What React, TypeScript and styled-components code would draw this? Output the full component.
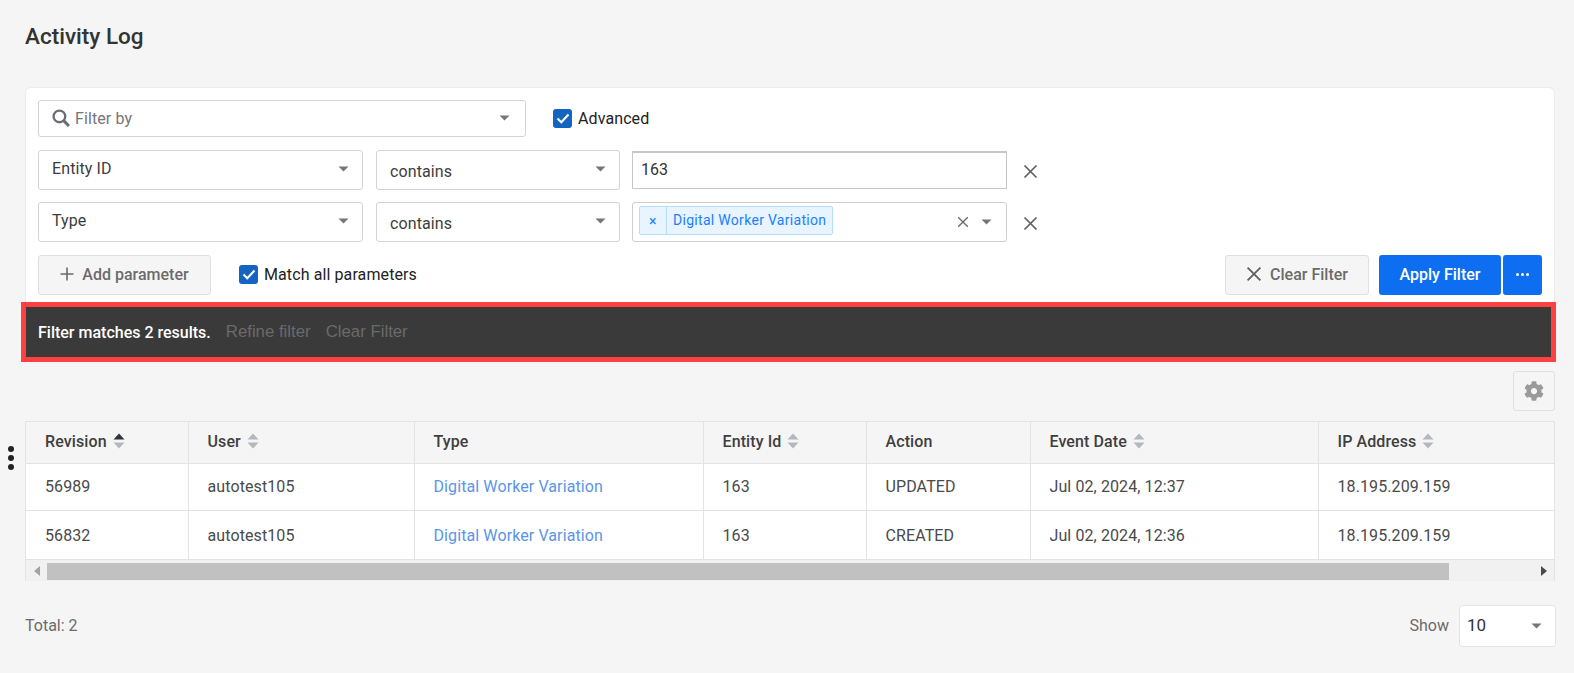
import styled, { createGlobalStyle } from "styled-components";
import { FaCog } from "react-icons/fa";

const GlobalStyle = createGlobalStyle`
  html, body {
    margin: 0;
    padding: 0;
    height: 100%;
    background: #f5f5f5;
    overflow: hidden;
  }
  body {
    font-family: Roboto, "Liberation Sans", sans-serif;
    color: #3a3a3a;
  }
`;

const Caret = ({ color = "#75757a" }: { color?: string }) => (
  <svg width="11" height="6" viewBox="0 0 11 6">
    <path d="M0.5 0.5h10L5.5 5.5z" fill={color} />
  </svg>
);

const CloseIcon = ({ size = 15, color = "#5f5f64" }: { size?: number; color?: string }) => (
  <svg width={size} height={size} viewBox="0 0 15 15" fill="none" stroke={color} strokeWidth="1.7">
    <path d="M1.5 1.5l12 12M13.5 1.5l-12 12" />
  </svg>
);

const CheckIcon = () => (
  <svg width="14" height="11" viewBox="0 0 14 11" fill="none" stroke="#fff" strokeWidth="2">
    <path d="M1.5 5.5l3.8 3.8L12.5 1.5" />
  </svg>
);

const SortIcon = ({ active }: { active?: boolean }) => (
  <SortBox width="12" height="16" viewBox="0 0 12 16">
    <path d="M6 0.5L11.5 6.5H0.5z" fill={active ? "#333" : "#b4b8bd"} />
    <path d="M6 15.5L0.5 9.5H11.5z" fill="#b4b8bd" />
  </SortBox>
);

const Page = styled.div`
  position: relative;
  height: 673px;
  padding: 0 19px 0 25px;
  box-sizing: border-box;
`;

const Title = styled.h1`
  margin: 0;
  padding-top: 23px;
  height: 87px;
  box-sizing: border-box;
  font-size: 22.5px;
  line-height: 27px;
  font-weight: 500;
  color: #333;
`;

const Card = styled.section`
  background: #fff;
  border: 1px solid #ebebeb;
  border-bottom: 0;
  border-radius: 6px 6px 0 0;
  padding-top: 12px;
`;

const FilterArea = styled.div`
  padding: 0 12px 7px 12px;
  display: flex;
  flex-direction: column;
`;

const Row = styled.div<{ $height: number; $gap?: number; $mb?: number }>`
  display: flex;
  align-items: center;
  height: ${(p) => p.$height}px;
  gap: ${(p) => p.$gap ?? 13}px;
  margin-bottom: ${(p) => p.$mb ?? 12}px;
`;

const Field = styled.div<{ $width: number; $muted?: boolean }>`
  width: ${(p) => p.$width}px;
  height: 100%;
  box-sizing: border-box;
  flex: none;
  display: flex;
  align-items: center;
  justify-content: space-between;
  background: #fff;
  border: 1px solid #d4d4d4;
  border-radius: 3px;
  padding: 0 ${(p) => (p.$muted ? 15 : 13)}px 2px 13px;
  font-size: 16px;
  letter-spacing: 0.1px;
  color: ${(p) => (p.$muted ? "#75757a" : "#3d3d3d")};
`;

const SearchLabel = styled.span`
  display: flex;
  align-items: center;
  gap: 5px;
`;

const Value = styled.span<{ $drop?: number }>`
  position: relative;
  top: ${(p) => p.$drop ?? 0}px;
`;

const TextInput = styled.div`
  width: 375px;
  height: 38px;
  flex: none;
  box-sizing: border-box;
  margin-left: -1px;
  background: #fff;
  border: 1px solid #c6c6c6;
  border-top-width: 2px;
  display: flex;
  align-items: center;
  padding: 0 0 2px 8px;
  font-size: 16px;
  color: #333;
`;

const TagInput = styled(Field)`
  margin-left: -1px;
  padding: 0 14px 0 6px;
  border-color: #cfcfcf;
`;

const Chip = styled.div`
  display: flex;
  align-items: stretch;
  height: 29px;
  margin-bottom: 3px;
  box-sizing: border-box;
  background: #e8f4ff;
  border: 1px solid #b8dcff;
  border-radius: 2px;
  color: #1a7fff;
  font-size: 14px;
  letter-spacing: 0.3px;
`;

const ChipClose = styled.span`
  width: 26px;
  display: flex;
  align-items: center;
  justify-content: center;
  border-right: 1px solid #b8dcff;
`;

const ChipLabel = styled.span`
  display: flex;
  align-items: center;
  padding: 0 6px 1px;
`;

const TagControls = styled.div`
  display: flex;
  align-items: center;
  gap: 12px;
`;

const RemoveButton = styled.span`
  display: flex;
  margin: 2px 0 0 3px;
`;

const CheckLabel = styled.label<{ $left?: number; $lift?: number }>`
  display: flex;
  align-items: center;
  gap: 6px;
  margin-left: ${(p) => p.$left ?? 0}px;
  padding-bottom: ${(p) => p.$lift ?? 0}px;
  font-size: 16px;
  letter-spacing: 0.1px;
  color: #222;
`;

const CheckBox = styled.span`
  width: 19px;
  height: 19px;
  border-radius: 3px;
  background: #1565c0;
  display: flex;
  align-items: center;
  justify-content: center;
`;

const Spacer = styled.div`
  flex: 1;
`;

const GrayButton = styled.button<{ $width: number }>`
  width: ${(p) => p.$width}px;
  height: 40px;
  box-sizing: border-box;
  display: flex;
  align-items: center;
  justify-content: center;
  gap: 8px;
  padding: 0 0 2px;
  background: #f5f5f5;
  border: 1px solid #e0e0e0;
  border-radius: 3px;
  font: 500 16px Roboto, sans-serif;
  color: #6b6b6b;
`;

const BlueButton = styled.button<{ $width: number }>`
  width: ${(p) => p.$width}px;
  height: 40px;
  display: flex;
  align-items: center;
  justify-content: center;
  padding: 0 0 2px;
  background: #0d6ef2;
  border: 0;
  border-radius: 3px;
  font: 500 16px Roboto, sans-serif;
  color: #fff;
`;

const ButtonGroup = styled.div`
  display: flex;
  gap: 2px;
  margin-left: 10px;
`;

const ResultBar = styled.div`
  height: 60px;
  box-sizing: border-box;
  margin: 0 -2px 0 -5px;
  border: 5px solid #ff4040;
  background: #3a3a3a;
  display: flex;
  align-items: center;
  gap: 15px;
  padding: 0 0 0 12px;
  font-size: 16px;
`;

const ResultText = styled.span`
  color: #fff;
  font-weight: 500;
`;

const ResultLink = styled.span`
  color: #6a6a6a;
  font-family: "Liberation Sans", sans-serif;
  font-size: 16.8px;
`;

const Toolbar = styled.div`
  display: flex;
  justify-content: flex-end;
  margin: 9px 0 10px 0;
`;

const GearButton = styled.div`
  width: 42px;
  height: 40px;
  box-sizing: border-box;
  display: flex;
  align-items: center;
  justify-content: center;
  background: #f5f5f5;
  border: 1px solid #e0e0e0;
  border-radius: 3px;
  color: #9a9a9a;
`;

const TableWrap = styled.div`
  border: 1px solid #e3e3e3;
  border-bottom: 0;
  background: #fff;
`;

const Table = styled.table`
  width: 100%;
  border-collapse: collapse;
  table-layout: fixed;
  font-size: 16px;

  tbody tr:first-child td {
    height: 47px;
    padding-top: 0;
  }
`;

const Th = styled.th<{ $width?: number }>`
  width: ${(p) => (p.$width ? `${p.$width}px` : "auto")};
  height: 41px;
  box-sizing: border-box;
  padding: 0 0 2px 19px;
  background: #f5f5f5;
  border-right: 1px solid #e3e3e3;
  border-bottom: 1px solid #e3e3e3;
  text-align: left;
  font-weight: 500;
  color: #3f3f3f;
  &:last-child {
    border-right: 0;
  }
`;

const ThInner = styled.span`
  display: flex;
  align-items: center;
  gap: 6px;
  letter-spacing: 0.1px;
`;

const SortBox = styled.svg`
  flex: none;
`;

const Td = styled.td`
  height: 49px;
  box-sizing: border-box;
  padding: 1px 0 0 19px;
  border-right: 1px solid #e3e3e3;
  border-bottom: 1px solid #e3e3e3;
  color: #4a4a4a;
  letter-spacing: 0.1px;
  &:last-child {
    border-right: 0;
  }
`;

const EntityLink = styled.span`
  color: #5b95e8;
`;

const Scrollbar = styled.div`
  height: 21px;
  box-sizing: border-box;
  background: #f1f1f1;
  padding-top: 2px;
  display: flex;
  align-items: center;
  justify-content: space-between;
`;

const ScrollArrow = styled.span`
  width: 21px;
  flex: none;
  display: flex;
  justify-content: center;
`;

const ScrollThumb = styled.div`
  flex: none;
  width: 1402px;
  height: 17px;
  background: #c1c1c1;
`;

const ScrollRest = styled.div`
  flex: 1;
`;

const Footer = styled.footer`
  display: flex;
  align-items: center;
  justify-content: space-between;
  margin: 24px -1px 0 0;
  font-size: 16px;
  color: #6b6b6b;
`;

const PageSize = styled.div`
  display: flex;
  align-items: center;
  gap: 10px;
`;

const ShowSelect = styled.div`
  width: 97px;
  height: 42px;
  box-sizing: border-box;
  background: #fff;
  border: 1px solid #e4e4e4;
  border-radius: 3px;
  display: flex;
  align-items: center;
  justify-content: space-between;
  padding: 0 13px 0 7px;
  font-size: 17px;
  color: #333;
`;

const DragHandle = styled.svg`
  position: absolute;
  left: 8px;
  top: 446px;
`;

const columns = [
  { label: "Revision", width: 162, sort: true, active: true },
  { label: "User", width: 226, sort: true },
  { label: "Type", width: 289, sort: false },
  { label: "Entity Id", width: 163, sort: true },
  { label: "Action", width: 164, sort: false },
  { label: "Event Date", width: 288, sort: true },
  { label: "IP Address", sort: true },
];

const rows = [
  ["56989", "autotest105", "Digital Worker Variation", "163", "UPDATED", "Jul 02, 2024, 12:37", "18.195.209.159"],
  ["56832", "autotest105", "Digital Worker Variation", "163", "CREATED", "Jul 02, 2024, 12:36", "18.195.209.159"],
];

export default function App() {
  return (
    <Page>
      <GlobalStyle />
      <Title>Activity Log</Title>
      <Card>
        <FilterArea>
          <Row $height={37} $mb={13} $gap={0}>
            <Field $width={488} $muted>
              <SearchLabel>
                <svg width="18" height="18" viewBox="0 0 17 17" fill="none" stroke="#6a6e73" strokeWidth="2.2">
                  <circle cx="7" cy="7" r="5.5" />
                  <path d="M11 11l5 5" strokeWidth="2.8" />
                </svg>
                <Value $drop={1}>Filter by</Value>
              </SearchLabel>
              <Caret />
            </Field>
            <CheckLabel $left={27}>
              <CheckBox>
                <CheckIcon />
              </CheckBox>
              Advanced
            </CheckLabel>
          </Row>
          <Row $height={40}>
            <Field $width={325}>
              <Value $drop={-1}>Entity ID</Value>
              <Caret />
            </Field>
            <Field $width={244}>
              <Value $drop={2}>contains</Value>
              <Caret />
            </Field>
            <TextInput>163</TextInput>
            <RemoveButton>
              <CloseIcon />
            </RemoveButton>
          </Row>
          <Row $height={40} $mb={13}>
            <Field $width={325}>
              <Value $drop={-1}>Type</Value>
              <Caret />
            </Field>
            <Field $width={244}>
              <Value $drop={2}>contains</Value>
              <Caret />
            </Field>
            <TagInput $width={375}>
              <Chip>
                <ChipClose>×</ChipClose>
                <ChipLabel>Digital Worker Variation</ChipLabel>
              </Chip>
              <TagControls>
                <CloseIcon size={12} color="#6a6a6a" />
                <Caret />
              </TagControls>
            </TagInput>
            <RemoveButton>
              <CloseIcon />
            </RemoveButton>
          </Row>
          <Row $height={40} $mb={0} $gap={0}>
            <GrayButton $width={173}>
              <svg width="14" height="14" viewBox="0 0 14 14" stroke="#6b6b6b" strokeWidth="1.6">
                <path d="M7 0.5v13M0.5 7h13" />
              </svg>
              Add parameter
            </GrayButton>
            <CheckLabel $left={28} $lift={2}>
              <CheckBox>
                <CheckIcon />
              </CheckBox>
              Match all parameters
            </CheckLabel>
            <Spacer />
            <GrayButton $width={144}>
              <CloseIcon size={16} />
              Clear Filter
            </GrayButton>
            <ButtonGroup>
              <BlueButton $width={122}>Apply Filter</BlueButton>
              <BlueButton $width={39}>
                <svg width="13" height="3" viewBox="0 0 13 3" fill="#fff">
                  <circle cx="1.5" cy="1.5" r="1.5" />
                  <circle cx="6.5" cy="1.5" r="1.5" />
                  <circle cx="11.5" cy="1.5" r="1.5" />
                </svg>
              </BlueButton>
            </ButtonGroup>
          </Row>
        </FilterArea>
        <ResultBar>
          <ResultText>Filter matches 2 results.</ResultText>
          <ResultLink>Refine filter</ResultLink>
          <ResultLink>Clear Filter</ResultLink>
        </ResultBar>
      </Card>
      <Toolbar>
        <GearButton>
          <FaCog size={20} />
        </GearButton>
      </Toolbar>
      <TableWrap>
        <Table>
          <thead>
            <tr>
              {columns.map((c) => (
                <Th key={c.label} $width={c.width}>
                  <ThInner>
                    {c.label}
                    {c.sort && <SortIcon active={c.active} />}
                  </ThInner>
                </Th>
              ))}
            </tr>
          </thead>
          <tbody>
            {rows.map((r) => (
              <tr key={r[0]}>
                {r.map((cell, i) => (
                  <Td key={i}>{i === 2 ? <EntityLink>{cell}</EntityLink> : cell}</Td>
                ))}
              </tr>
            ))}
          </tbody>
        </Table>
        <Scrollbar>
          <ScrollArrow>
            <svg width="6" height="10" viewBox="0 0 6 10">
              <path d="M6 0v10L0 5z" fill="#a3a3a3" />
            </svg>
          </ScrollArrow>
          <ScrollThumb />
          <ScrollRest />
          <ScrollArrow>
            <svg width="6" height="10" viewBox="0 0 6 10">
              <path d="M0 0v10l6-5z" fill="#4a4a4a" />
            </svg>
          </ScrollArrow>
        </Scrollbar>
      </TableWrap>
      <Footer>
        <span>Total: 2</span>
        <PageSize>
          Show
          <ShowSelect>
            <Value $drop={-1}>10</Value>
            <Caret />
          </ShowSelect>
        </PageSize>
      </Footer>
      <DragHandle width="6" height="24" viewBox="0 0 6 24" fill="#222">
        <circle cx="3" cy="3" r="3" />
        <circle cx="3" cy="12" r="3" />
        <circle cx="3" cy="21" r="3" />
      </DragHandle>
    </Page>
  );
}
